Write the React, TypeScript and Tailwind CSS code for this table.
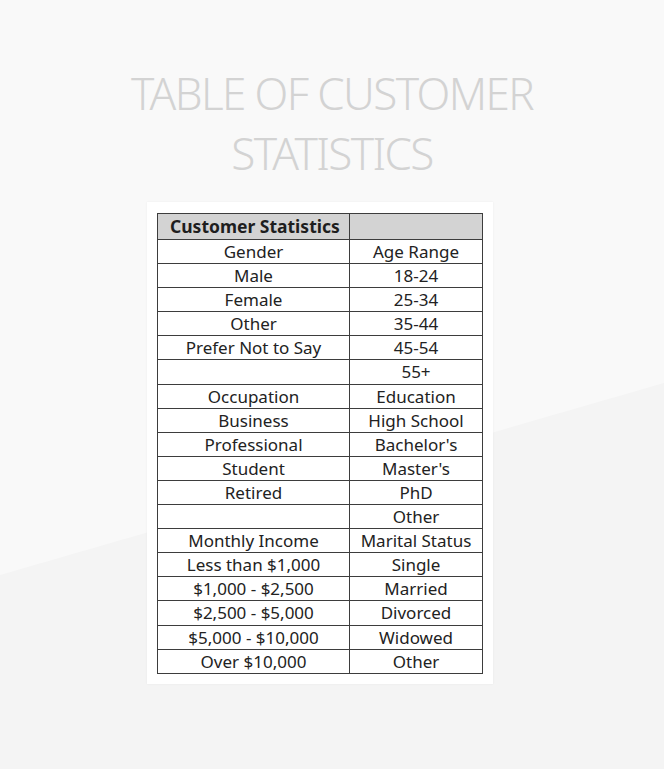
import * as React from "react";

const rows: [string, string][] = [
  ["Gender", "Age Range"],
  ["Male", "18-24"],
  ["Female", "25-34"],
  ["Other", "35-44"],
  ["Prefer Not to Say", "45-54"],
  ["", "55+"],
  ["Occupation", "Education"],
  ["Business", "High School"],
  ["Professional", "Bachelor's"],
  ["Student", "Master's"],
  ["Retired", "PhD"],
  ["", "Other"],
  ["Monthly Income", "Marital Status"],
  ["Less than $1,000", "Single"],
  ["$1,000 - $2,500", "Married"],
  ["$2,500 - $5,000", "Divorced"],
  ["$5,000 - $10,000", "Widowed"],
  ["Over $10,000", "Other"],
];

export default function App() {
  return (
    <div
      className="relative w-[664px] h-[769px] overflow-hidden bg-[#f9f9f9]"
      style={{ fontFamily: '"Noto Sans", "Open Sans", sans-serif' }}
    >
      {/* lower background band */}
      <svg
        className="absolute inset-0"
        width="664"
        height="769"
        viewBox="0 0 664 769"
      >
        <polygon points="0,575 664,383 664,769 0,769" fill="#f4f4f4" />
      </svg>

      <div className="relative flex flex-col">
        {/* Title */}
        <h1 className="mt-[63px] text-center text-[44px] leading-[60px] font-light tracking-[-1.6px] text-[#d3d3d3]">
          TABLE OF CUSTOMER
          <br />
          STATISTICS
        </h1>

        {/* Card */}
        <div className="mt-[19px] ml-[147px] w-[346px] bg-white p-[10px] pt-[11px] shadow-[0_0_2px_rgba(0,0,0,0.06)]">
          <div className="border border-[#3d3d3d] text-[#222] text-[17px]">
            <div className="grid grid-cols-[192px_1fr] h-[25px] bg-[#d3d3d3]">
              <div className="border-r border-[#3d3d3d] pl-[12px] font-bold text-[17.5px] leading-[24px] text-[#1e1e1e]">
                Customer Statistics
              </div>
              <div />
            </div>
            {rows.map(([a, b], i) => (
              <div
                key={i}
                className="grid grid-cols-[192px_1fr] h-[24.1px] border-t border-[#3d3d3d]"
              >
                <div className="border-r border-[#3d3d3d] text-center leading-[23px]">
                  {a}
                </div>
                <div className="text-center leading-[23px]">{b}</div>
              </div>
            ))}
          </div>
        </div>
      </div>
    </div>
  );
}
